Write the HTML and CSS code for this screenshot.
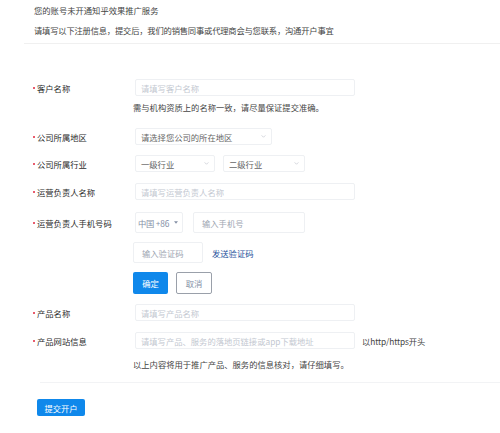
FILE: index.html
```html
<!DOCTYPE html>
<html lang="zh-CN">
<head>
<meta charset="utf-8">
<link rel="stylesheet" href="styles.css">
</head>
<body>
<div class="intro">
  <p class="intro-title">您的账号未开通知乎效果推广服务</p>
  <p class="intro-desc">请填写以下注册信息，提交后，我们的销售同事或代理商会与您联系，沟通开户事宜</p>
</div>
<div class="form">
  <div class="row r1">
    <div class="label"><span class="dot"></span>客户名称</div>
    <div class="input w220"><span class="ph">请填写客户名称</span></div>
  </div>
  <div class="hint h1">需与机构资质上的名称一致，请尽量保证提交准确。</div>
  <div class="row r2">
    <div class="label"><span class="dot"></span>公司所属地区</div>
    <div class="input select w137"><span class="val">请选择您公司的所在地区</span><svg class="chev" viewBox="0 0 6 4" width="5" height="3"><path d="M0.5 0.5 L3 3 L5.5 0.5" fill="none" stroke="#c0c4cc" stroke-width="0.9"/></svg></div>
  </div>
  <div class="row r3">
    <div class="label"><span class="dot"></span>公司所属行业</div>
    <div class="fields">
      <div class="input select w80"><span class="val">一级行业</span><svg class="chev" viewBox="0 0 6 4" width="5" height="3"><path d="M0.5 0.5 L3 3 L5.5 0.5" fill="none" stroke="#c0c4cc" stroke-width="0.9"/></svg></div>
      <div class="input select w82"><span class="val">二级行业</span><svg class="chev" viewBox="0 0 6 4" width="5" height="3"><path d="M0.5 0.5 L3 3 L5.5 0.5" fill="none" stroke="#c0c4cc" stroke-width="0.9"/></svg></div>
    </div>
  </div>
  <div class="row r4">
    <div class="label"><span class="dot"></span>运营负责人名称</div>
    <div class="input w220"><span class="ph">请填写运营负责人名称</span></div>
  </div>
  <div class="row r5">
    <div class="label"><span class="dot"></span>运营负责人手机号码</div>
    <div class="fields gap10">
      <div class="input tall w48 country"><span class="val">中国 +86</span><svg class="caret" viewBox="0 0 6 4" width="4" height="3"><path d="M0 0 L6 0 L3 4 Z" fill="#8590a6"/></svg></div>
      <div class="input tall w112"><span class="ph dark">输入手机号</span></div>
    </div>
  </div>
  <div class="row r6 nolabel">
    <div class="input tall w70"><span class="ph dark">输入验证码</span></div>
    <span class="link">发送验证码</span>
  </div>
  <div class="row r7 nolabel">
    <span class="btn primary">确定</span>
    <span class="btn ghost">取消</span>
  </div>
  <div class="row r8">
    <div class="label"><span class="dot"></span>产品名称</div>
    <div class="input w220"><span class="ph">请填写产品名称</span></div>
  </div>
  <div class="row r9">
    <div class="label"><span class="dot"></span>产品网站信息</div>
    <div class="input w220"><span class="ph">请填写产品、服务的落地页链接或app下载地址</span></div>
    <span class="suffix">以http/https开头</span>
  </div>
  <div class="hint h2">以上内容将用于推广产品、服务的信息核对，请仔细填写。</div>
  <div class="divider"></div>
  <div class="submit-row">
    <span class="btn submit">提交开户</span>
  </div>
</div>
</body>
</html>
```
FILE: styles.css
```css
* { box-sizing: border-box; }
html, body { margin: 0; padding: 0; background: #fff; }
body {
  font-family: "Noto Sans CJK SC", "Noto Sans", "Liberation Sans", sans-serif;
  font-size: 8.3px;
  color: #333;
  width: 500px;
  height: 433px;
  overflow: hidden;
}
p { margin: 0; }
.intro {
  height: 44px;
  margin-left: 24px;
  padding-left: 10px;
  border-bottom: 1px solid #f0f0f0;
}
.intro-title { padding-top: 4px; line-height: 12px; color: #444; }
.intro-desc { padding-top: 8px; line-height: 12px; color: #444; letter-spacing: -0.2px; }

.form { display: flex; flex-direction: column; padding-top: 35px; }
.row { display: flex; align-items: center; }
.label {
  width: 135px;
  padding-left: 33px;
  display: flex;
  align-items: center;
  color: #2b2b2b;
  line-height: 12px;
}
.dot {
  width: 2px; height: 2px; border-radius: 50%;
  background: #e0263c;
  margin-right: 2px;
}
.fields { display: flex; gap: 8px; }
.fields.gap10 { gap: 10px; }
.input {
  height: 17px;
  border: 1px solid #eef0f3;
  border-radius: 2px;
  display: flex;
  align-items: center;
  padding: 0 5px;
  background: #fff;
  line-height: 12px;
  white-space: nowrap;
}
.input.tall { height: 21px; padding: 0 8px; }
.select { justify-content: space-between; }
.w220 { width: 220px; }
.w137 { width: 137px; }
.w80 { width: 80px; }
.w82 { width: 82px; }
.w48 { width: 48px; }
.w112 { width: 112px; }
.w70 { width: 70px; }
.ph { color: #c3c8d1; }
.ph.dark { color: #a0a6b2; }
.val { color: #666; }
.input.tall.country { padding: 0 4px 0 2px; justify-content: space-between; }
.country .val { color: #8590a6; letter-spacing: -0.2px; }
.chev { display: block; flex: none; }
.caret { display: block; flex: none; }
.hint { padding-left: 133px; line-height: 12px; color: #444; }
.h1 { margin-top: 5px; }
.r2 { margin-top: 15px; }
.r3 { margin-top: 10px; }
.r4 { margin-top: 11px; }
.r5 { margin-top: 12px; }
.r6 { margin-top: 9px; }
.r7 { margin-top: 9px; gap: 8px; }
.r8 { margin-top: 10px; }
.r9 { margin-top: 11px; }
.h2 { margin-top: 9px; }
.nolabel { padding-left: 133px; }
.link { margin-left: 9px; color: #1d4f9a; line-height: 12px; }
.btn {
  display: inline-flex;
  align-items: center;
  justify-content: center;
  border-radius: 2px;
  line-height: 12px;
}
.primary { width: 35px; height: 22px; background: #0f88eb; color: #fff; }
.ghost { width: 36px; height: 22px; border: 1px solid #9aa0aa; color: #8590a6; background: #fff; }
.suffix { margin-left: 7px; color: #444; line-height: 12px; letter-spacing: -0.1px; }
.divider { margin: 12px 0 0 40px; height: 1px; background: #f2f3f5; }
.submit-row { margin-top: 16px; padding-left: 37px; }
.submit { width: 48px; height: 17px; background: #0f88eb; color: #fff; }
```
